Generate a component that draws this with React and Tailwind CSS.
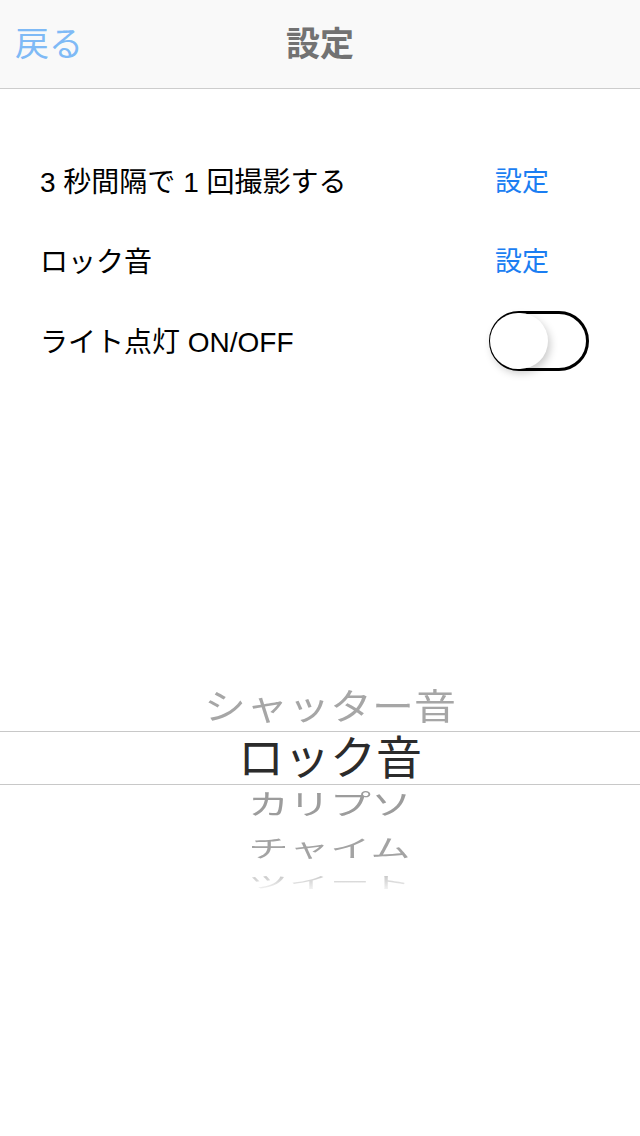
const jp = { fontFamily: '"Helvetica Neue", "Liberation Sans", "Noto Sans CJK JP", sans-serif' };

function Toggle() {
  return (
    <div className="relative w-[100px] h-[60px] rounded-full border-[3px] border-black bg-white">
      <div className="absolute left-[-2px] top-[-1px] w-[58px] h-[56px] rounded-full bg-white shadow-[2px_4px_8px_rgba(0,0,0,0.22)]" />
    </div>
  );
}

function Row({ label, children }) {
  return (
    <div className="h-[80px] flex items-center justify-between pl-[40px] pr-[51px]">
      <span className="pt-[3px] text-[28px] text-black">{label}</span>
      <div className="w-[100px] flex items-center">{children}</div>
    </div>
  );
}

export default function App() {
  return (
    <div className="min-h-screen bg-white" style={jp}>
      <header className="h-[89px] bg-[#f9f9f9] border-b border-[#cdcdcd] relative flex items-center justify-center">
        <span className="absolute left-[15px] top-[19px] text-[34px] text-[#7fbaf6]">戻る</span>
        <h1 className="text-[34px] font-bold text-[#727272]">設定</h1>
      </header>

      <div className="pt-[52px]">
        <Row label="3 秒間隔で 1 回撮影する">
          <span className="pl-[6px] pt-[3px] text-[27px] text-[#1b7ef2]">設定</span>
        </Row>
        <Row label="ロック音">
          <span className="pl-[6px] pt-[3px] text-[27px] text-[#1b7ef2]">設定</span>
        </Row>
        <Row label="ライト点灯 ON/OFF">
          <Toggle />
        </Row>
      </div>

      <div className="mt-[303px] flex flex-col">
        <div className="h-[47px] flex items-center justify-center pl-[20px]">
          <span className="text-[42px] leading-none text-[#a6a6a6] scale-y-[0.86]">シャッター音</span>
        </div>
        <div className="h-[54px] border-y border-[#c8c8c8] flex items-center justify-center pl-[20px]">
          <span className="text-[46px] leading-none text-[#2b2b2b]">ロック音</span>
        </div>
        <div className="h-[41px] flex items-center justify-center pl-[20px]">
          <span className="text-[41px] leading-none text-[#9c9c9c] scale-y-[0.7]">カリプソ</span>
        </div>
        <div className="h-[45px] flex items-center justify-center pl-[20px]">
          <span className="text-[40px] leading-none text-[#a3a3a3] scale-y-[0.6] tracking-[1px]">チャイム</span>
        </div>
        <div className="h-[22px] flex items-center justify-center pl-[20px] overflow-hidden">
          <span className="text-[40px] leading-none scale-y-[0.4] tracking-[1px] bg-linear-to-b from-[#c4c4c4] to-[#f4f4f4] bg-clip-text text-transparent">ツイート</span>
        </div>
      </div>
    </div>
  );
}
